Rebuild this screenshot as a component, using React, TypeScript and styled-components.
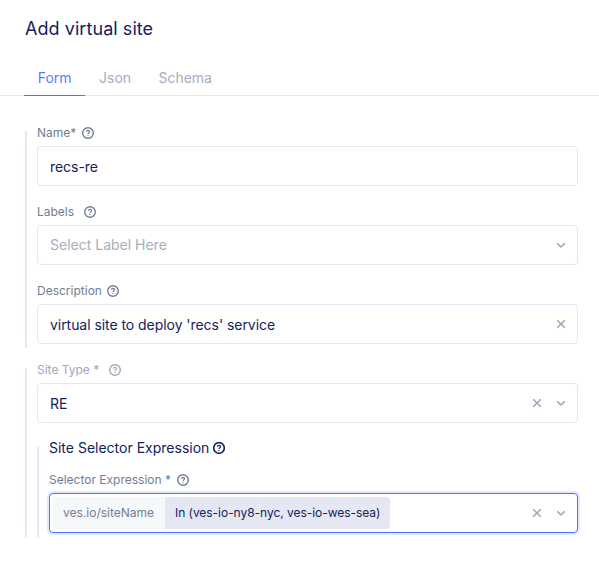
import React from 'react';
import styled, { createGlobalStyle } from 'styled-components';

const GlobalStyle = createGlobalStyle`
  * { box-sizing: border-box; }
  body {
    margin: 0;
    background: #fff;
    color: #14225c;
    font-family: Inter, "Liberation Sans", sans-serif;
    font-size: 14px;
    -webkit-font-smoothing: antialiased;
  }
`;

const Page = styled.main`
  width: 599px;
  height: 569px;
  overflow: hidden;
  background: #fff;
`;

const Title = styled.h1`
  margin: 0;
  padding: 17px 0 0 25px;
  height: 61px;
  font-size: 18px;
  line-height: 24px;
  font-weight: 400;
  letter-spacing: 0.06px;
`;

const Tabs = styled.nav`
  display: flex;
  height: 35px;
  padding-left: 24px;
  border-bottom: 1px solid #e4e6f3;
`;

const Tab = styled.a<{ $active?: boolean }>`
  height: 35px;
  padding: 7px 13.8px 0;
  line-height: 20px;
  letter-spacing: -0.04px;
  color: ${(p) => (p.$active ? '#5a7cff' : '#a6aebe')};
  border-bottom: 1px solid ${(p) => (p.$active ? '#4f73ff' : 'transparent')};
`;

const Section = styled.section<{ $top: number; $height: number }>`
  display: flow-root;
  margin: ${(p) => p.$top}px 21px 0 25px;
  height: ${(p) => p.$height}px;
  padding-left: 10px;
  border-left: 2px solid #e4e7f7;
`;

const SubSection = styled.div`
  display: flow-root;
  height: 90px;
  margin-top: 24px;
  padding-left: 10px;
  border-left: 2px solid #e4e7f7;
`;

const Field = styled.div`
  height: 79px;
  &:first-child {
    margin-top: -24px;
  }
`;

const FieldGroup = styled.div`
  display: flow-root;
`;

const Label = styled.label<{ $gap: number; $muted?: boolean; $height?: number }>`
  display: flex;
  align-items: flex-end;
  gap: ${(p) => p.$gap}px;
  height: ${(p) => p.$height ?? 39}px;
  padding-bottom: 5px;
  font-size: 12px;
  line-height: 16px;
  color: ${(p) => (p.$muted ? '#a0a8ba' : '#727d92')};

  svg { margin-bottom: 2px; }
`;

const Heading = styled.h2`
  display: flex;
  align-items: center;
  gap: 3.5px;
  margin: -9px 0 0;
  height: 20px;
  font-size: 14px;
  line-height: 20px;
  font-weight: 400;
`;

const Control = styled.div<{ $focused?: boolean }>`
  display: flex;
  align-items: center;
  height: 40px;
  padding: 0 10px 0 ${(p) => (p.$focused ? 3 : 12)}px;
  border: 1px solid ${(p) => (p.$focused ? '#4f73ff' : '#e4e6f3')};
  border-radius: 4px;
  box-shadow: ${(p) => (p.$focused ? '0 0 0 2px #e4e9fd' : 'none')};
`;

const Value = styled.span<{ $placeholder?: boolean }>`
  flex: 1;
  line-height: 20px;
  padding-top: ${(p) => (p.$placeholder ? 0 : 2)}px;
  letter-spacing: ${(p) => (p.$placeholder ? 0 : -0.05)}px;
  color: ${(p) => (p.$placeholder ? '#a6aebe' : 'inherit')};
`;

const Actions = styled.span`
  display: flex;
  gap: 12px;
  margin-left: auto;
`;

const Tag = styled.div`
  display: flex;
  height: 32px;
  border-radius: 4px;
  overflow: hidden;
  font-size: 12px;
  line-height: 32px;
`;

const TagKey = styled.span`
  width: 112px;
  padding-left: 10px;
  background: #f7f8fa;
  color: #727d92;
`;

const TagValue = styled.span`
  width: 225px;
  padding-left: 10px;
  background: #e5e8f2;
  white-space: nowrap;
  letter-spacing: -0.04px;
`;

const Icon = styled.svg`
  display: block;
  flex: none;
  fill: none;
  stroke: currentColor;
`;

const ActionIcon = styled(Icon)`
  color: #a0a8ba;
  stroke-width: 1.6;
`;

const Help = ({ bold }: { bold?: boolean }) => (
  <Icon width="12" height="12" viewBox="0 0 12 12" strokeWidth={bold ? 1.6 : 1.4}>
    <circle cx="6" cy="6" r="5.3" />
    <g strokeWidth="1.2">
      <path d="M4.5 4.8C4.5 3.9 5.1 3.3 6 3.3s1.5.5 1.5 1.4C7.5 5.6 6 5.8 6 7" />
      <path d="M6 7.9v1.2" />
    </g>
  </Icon>
);

const Clear = () => (
  <ActionIcon width="12" height="12" viewBox="0 0 12 12">
    <path d="M2.2 2.2l7.6 7.6M9.8 2.2L2.2 9.8" />
  </ActionIcon>
);

const Chevron = () => (
  <ActionIcon width="12" height="12" viewBox="0 0 12 12">
    <path d="M2.2 4.4L6 8l3.8-3.6" />
  </ActionIcon>
);

export default function App() {
  return (
    <Page>
      <GlobalStyle />
      <Title>Add virtual site</Title>
      <Tabs>
        <Tab $active>Form</Tab>
        <Tab>Json</Tab>
        <Tab>Schema</Tab>
      </Tabs>

      <Section $top={35} $height={217}>
        <Field>
          <Label $gap={6}>Name* <Help /></Label>
          <Control><Value>recs-re</Value></Control>
        </Field>
        <Field>
          <Label $gap={9.5}>Labels <Help /></Label>
          <Control>
            <Value $placeholder>Select Label Here</Value>
            <Actions><Chevron /></Actions>
          </Control>
        </Field>
        <Field>
          <Label $gap={5.5}>Description <Help /></Label>
          <Control>
            <Value>virtual site to deploy 'recs' service</Value>
            <Actions><Clear /></Actions>
          </Control>
        </Field>
      </Section>

      <Section $top={20} $height={169}>
        <FieldGroup>
          <Field>
            <Label $gap={9.5} $muted>Site Type * <Help /></Label>
            <Control>
              <Value>RE</Value>
              <Actions><Clear /><Chevron /></Actions>
            </Control>
          </Field>
        </FieldGroup>
        <SubSection>
          <Heading>Site Selector Expression <Help bold /></Heading>
          <Label $gap={5.5} $height={35}>Selector Expression * <Help /></Label>
          <Control $focused>
            <Tag>
              <TagKey>ves.io/siteName</TagKey>
              <TagValue>In (ves-io-ny8-nyc, ves-io-wes-sea)</TagValue>
            </Tag>
            <Actions><Clear /><Chevron /></Actions>
          </Control>
        </SubSection>
      </Section>
    </Page>
  );
}
